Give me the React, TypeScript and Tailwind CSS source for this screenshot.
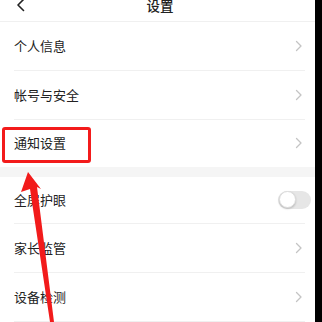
import React from "react";

const Chevron = () => (
  <svg width="8" height="12" viewBox="0 0 8 12" className="shrink-0">
    <polyline points="1.5,1.5 6,6 1.5,10.5" fill="none" stroke="#c4c4c4" strokeWidth="1.3" strokeLinecap="round" strokeLinejoin="round" />
  </svg>
);

const Row = ({ label, h, border = true, right }: { label: string; h: string; border?: boolean; right?: React.ReactNode }) => (
  <div className={`flex items-center pl-[14px] pr-[10px] ${h}`}>
    <div className={`flex h-full flex-1 items-center justify-between ${border ? "border-b border-[#f0f0f0]" : ""}`}>
      <span className="text-[13px] leading-[16px] text-[#222]">{label}</span>
      <div className="mr-[2px] flex items-center">{right ?? <Chevron />}</div>
    </div>
  </div>
);

export default function App() {
  return (
    <div
      className="relative flex h-[322px] w-[322px] overflow-hidden bg-black"
      style={{ fontFamily: '"Noto Sans CJK SC", "Noto Sans", sans-serif' }}
    >
      <div className="flex w-[315px] flex-col bg-white">
        <div className="relative flex h-[22px] shrink-0 items-start justify-center border-b border-[#f0f0f0]">
          <svg width="10" height="14" viewBox="0 0 10 14" className="absolute left-[16px] top-[-2px]">
            <polyline points="7.5,1.5 2,7 7.5,12.5" fill="none" stroke="#222" strokeWidth="1.6" strokeLinecap="round" strokeLinejoin="round" />
          </svg>
          <span className="-mt-[3px] ml-[5px] text-[13.5px] font-medium leading-[16px] text-[#222]">设置</span>
        </div>
        <Row label="个人信息" h="h-[49px]" />
        <Row label="帐号与安全" h="h-[49px]" />
        <Row label="通知设置" h="h-[47px]" border={false} />
        <div className="h-[10px] shrink-0 bg-[#f5f5f5]" />
        <Row
          label="全屏护眼"
          h="h-[48px]"
          right={
            <div className="relative -mr-[8px] h-[18px] w-[33px] rounded-full bg-[#e6e6e6]">
              <div className="absolute left-[0.5px] top-[0.5px] h-[17px] w-[17px] rounded-full border border-[#dcdcdc] bg-white shadow-[0_1px_2px_rgba(0,0,0,0.2)]" />
            </div>
          }
        />
        <Row label="家长监管" h="h-[49px]" />
        <Row label="设备检测" h="h-[49px]" />
      </div>

      <div className="pointer-events-none absolute left-[2px] top-[127px] h-[36px] w-[89px] rounded-[3px] border-[3px] border-[#f31b1b]" />

      <svg width="322" height="322" viewBox="0 0 322 322" className="pointer-events-none absolute left-0 top-0">
        <polygon
          points="28,172 21,192 30,189 50,322 54,322 37,187 41,189"
          fill="#f21b1b"
        />
      </svg>
    </div>
  );
}
